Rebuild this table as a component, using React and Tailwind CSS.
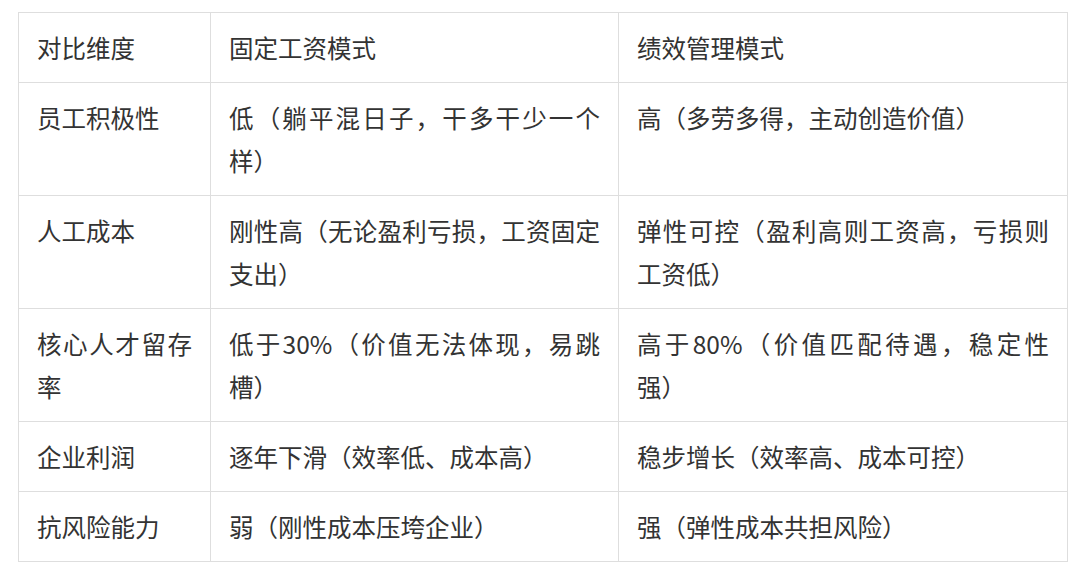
import React from 'react';

// '\n' marks a line break that the original layout had
const rows = [
  ['员工积极性', '低（躺平混日子，干多干少一个样）', '高（多劳多得，主动创造价值）'],
  ['人工成本', '刚性高（无论盈利亏损，工资固定支出）', '弹性可控（盈利高则工资高，亏损则工资低）'],
  ['核心人才留存率', '低于30%（价值无法体现，易跳槽）', '高于80%（价值匹配待遇，稳定性\n强）'],
  ['企业利润', '逐年下滑（效率低、成本高）', '稳步增长（效率高、成本可控）'],
  ['抗风险能力', '弱（刚性成本压垮企业）', '强（弹性成本共担风险）'],
];

const cell = 'border border-[#dedede] px-[18px] py-[13px] align-top text-justify';

const CellText = ({ text }) => {
  const lines = text.split('\n');
  if (lines.length === 1) return text;
  return lines.map((line, i) => (
    <span key={i} className={i < lines.length - 1 ? 'block [text-align-last:justify]' : 'block'}>
      {line}
    </span>
  ));
};

const App = () => {
  return (
    <div className="min-h-[571px] w-[1080px] bg-white pl-[18px] pt-[12px]">
      <table
        className="w-[1049px] table-fixed border-collapse text-[24.5px] leading-[43px] text-[#333]"
        style={{ fontFamily: '"Noto Sans CJK SC", "Noto Sans", sans-serif' }}
      >
        <colgroup>
          <col className="w-[192px]" />
          <col className="w-[408px]" />
          <col className="w-[449px]" />
        </colgroup>
        <thead>
          <tr>
            <th className={`${cell} text-left font-normal`}>对比维度</th>
            <th className={`${cell} text-left font-normal`}>固定工资模式</th>
            <th className={`${cell} text-left font-normal`}>绩效管理模式</th>
          </tr>
        </thead>
        <tbody>
          {rows.map((row, i) => (
            <tr key={i}>
              {row.map((text, j) => (
                <td key={j} className={cell}>
                  <CellText text={text} />
                </td>
              ))}
            </tr>
          ))}
        </tbody>
      </table>
    </div>
  );
};

export default App;
